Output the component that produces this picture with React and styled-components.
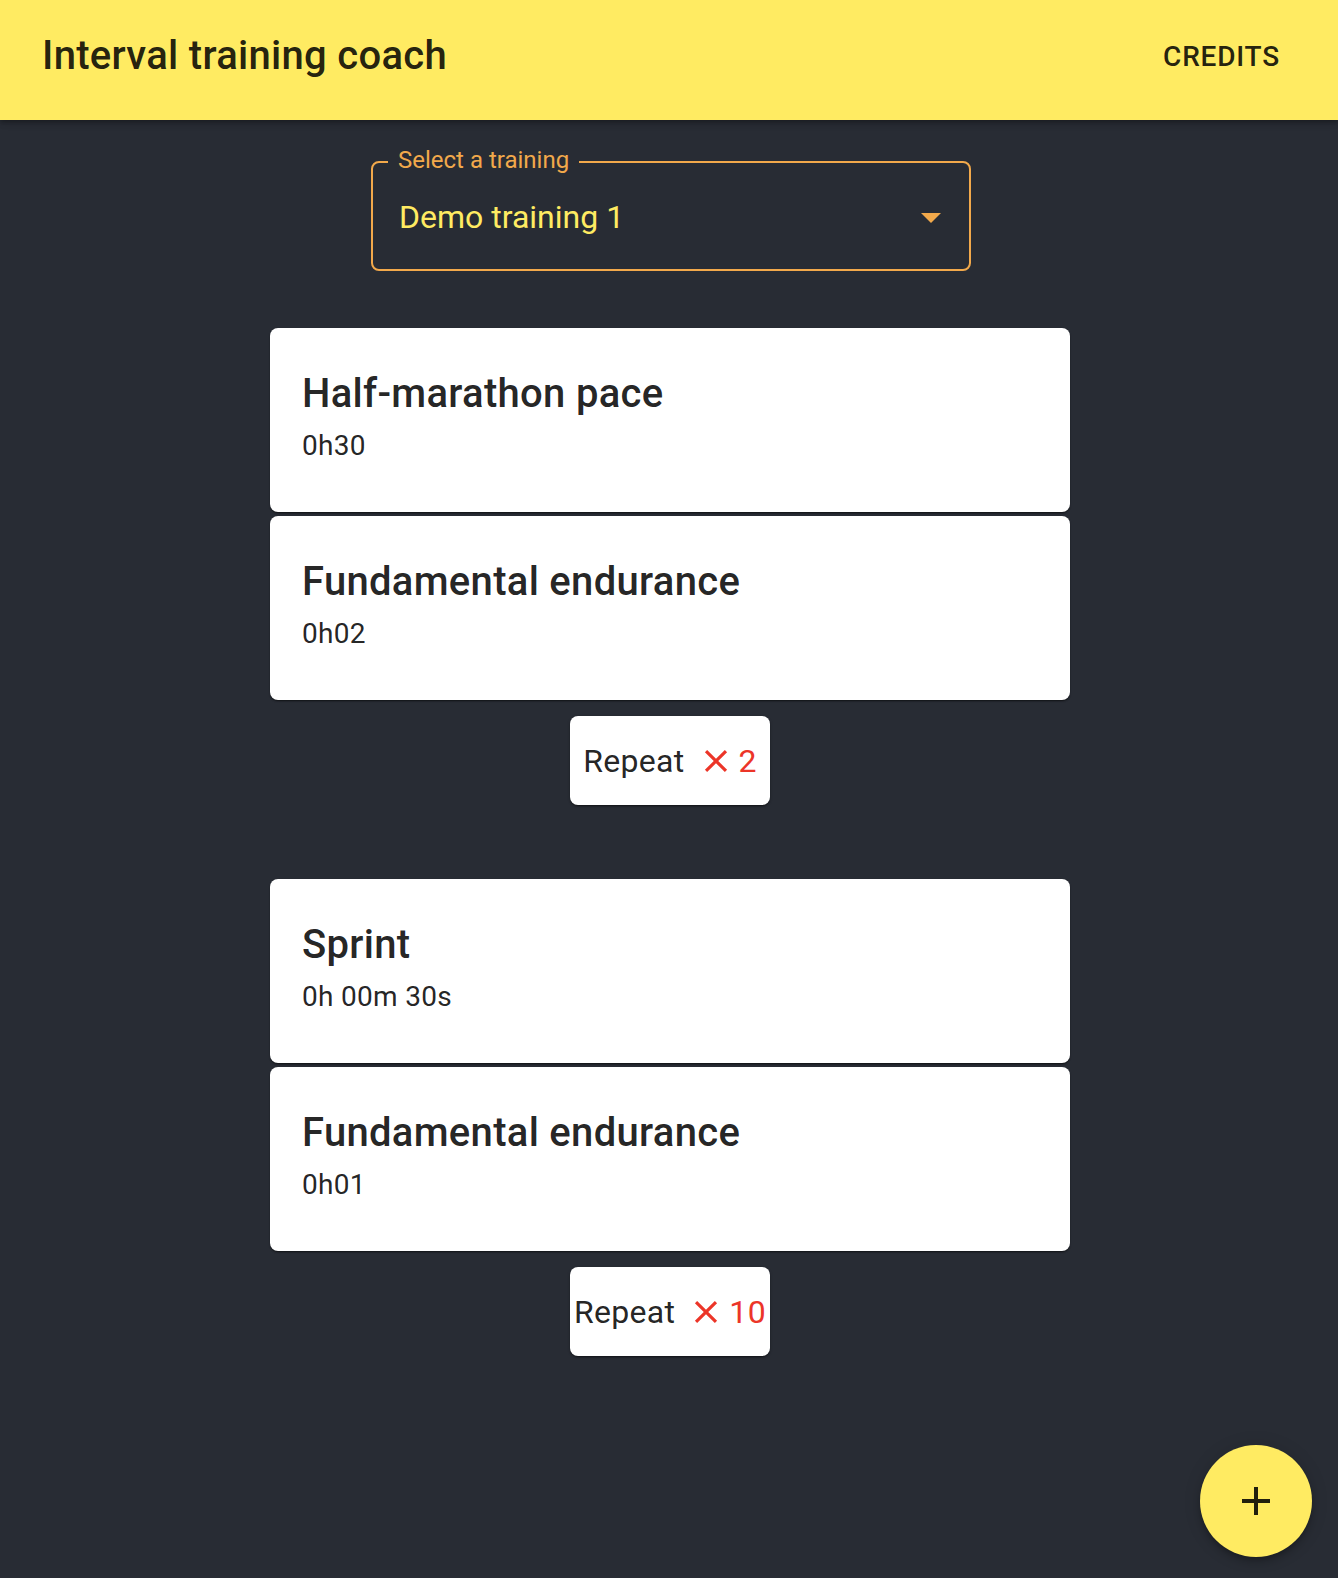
import React from "react";
import styled, { createGlobalStyle } from "styled-components";

const GlobalStyle = createGlobalStyle`
  body {
    margin: 0;
    background-color: #282c34;
    font-family: Roboto, "Liberation Sans", sans-serif;
  }
`;

const Page = styled.div`
  min-height: 100vh;
  background-color: #282c34;
`;

const Header = styled.header`
  display: flex;
  align-items: center;
  justify-content: space-between;
  box-sizing: border-box;
  height: 120px;
  padding: 0 42px 8px 42px;
  background-color: #ffeb62;
  color: rgba(0, 0, 0, 0.87);
  box-shadow: 0px 2px 4px -1px rgba(0, 0, 0, 0.2),
    0px 4px 5px 0px rgba(0, 0, 0, 0.14), 0px 1px 10px 0px rgba(0, 0, 0, 0.12);
`;

const Title = styled.h1`
  margin: 0;
  font-size: 40px;
  font-weight: 500;
  line-height: 1.6;
  letter-spacing: 0.3px;
`;

const CreditsButton = styled.button`
  border: none;
  background: transparent;
  padding: 12px 16px;
  font-family: inherit;
  font-size: 28px;
  font-weight: 500;
  letter-spacing: 0.8px;
  text-transform: uppercase;
  color: rgba(0, 0, 0, 0.87);
  cursor: pointer;
`;

const Main = styled.main`
  display: flex;
  flex-direction: column;
  align-items: center;
  padding: 41px 0 80px 2px;
`;

const SelectBox = styled.div`
  position: relative;
  display: flex;
  align-items: center;
  box-sizing: border-box;
  width: 600px;
  height: 110px;
  padding: 2px 14px 0 26px;
  border: 2px solid #f2a94b;
  border-radius: 8px;
  margin: 0 0 57px 2px;
  cursor: pointer;
`;

const SelectLabel = styled.span`
  position: absolute;
  top: -17px;
  left: 15px;
  padding: 0 10px;
  background-color: #282c34;
  color: #f2a94b;
  font-size: 24px;
  line-height: 28px;
`;

const SelectValue = styled.span`
  flex: 1;
  color: #ffeb62;
  font-size: 32px;
  line-height: 1.4375;
`;

const Group = styled.section`
  display: flex;
  flex-direction: column;
  align-items: center;
  gap: 4px;
  margin-bottom: 74px;
`;

const Card = styled.div`
  box-sizing: border-box;
  width: 800px;
  padding: 34px 32px 46px;
  background-color: #fff;
  border-radius: 8px;
  color: rgba(0, 0, 0, 0.87);
  box-shadow: 0px 2px 2px -1px rgba(0, 0, 0, 0.4),
    0px 1px 2px 0px rgba(0, 0, 0, 0.3);
`;

const CardTitle = styled.div`
  font-size: 40px;
  font-weight: 500;
  line-height: 64px;
  letter-spacing: 0.3px;
`;

const CardDuration = styled.div`
  font-size: 28px;
  line-height: 40px;
  letter-spacing: 0.3px;
`;

const RepeatBox = styled.div`
  display: flex;
  align-items: center;
  justify-content: center;
  box-sizing: border-box;
  width: 200px;
  height: 89px;
  margin-top: 12px;
  background-color: #fff;
  border-radius: 8px;
  color: rgba(0, 0, 0, 0.87);
  font-size: 32px;
  letter-spacing: 0.3px;
  white-space: nowrap;
  box-shadow: 0px 2px 2px -1px rgba(0, 0, 0, 0.4),
    0px 1px 3px 0px rgba(0, 0, 0, 0.3);
`;

const Times = styled.span`
  display: flex;
  align-items: center;
  gap: 4px;
  margin-left: 12px;
  color: #ec3528;
`;

const Fab = styled.button`
  position: fixed;
  right: 26px;
  bottom: 21px;
  display: flex;
  align-items: center;
  justify-content: center;
  width: 112px;
  height: 112px;
  padding: 0;
  border: none;
  border-radius: 50%;
  background-color: #ffeb62;
  color: rgba(0, 0, 0, 0.87);
  cursor: pointer;
  box-shadow: 0px 3px 5px -1px rgba(0, 0, 0, 0.2),
    0px 6px 10px 0px rgba(0, 0, 0, 0.14), 0px 1px 18px 0px rgba(0, 0, 0, 0.12);
`;

const ArrowDropDown = () => (
  <svg width="48" height="48" viewBox="0 0 24 24" fill="#f2a94b">
    <path d="M7 10l5 5 5-5z" />
  </svg>
);

const CloseIcon = () => (
  <svg width="38" height="38" viewBox="0 0 24 24" fill="currentColor">
    <path d="M19 6.41 17.59 5 12 10.59 6.41 5 5 6.41 10.59 12 5 17.59 6.41 19 12 13.41 17.59 19 19 17.59 13.41 12z" />
  </svg>
);

const AddIcon = () => (
  <svg width="48" height="48" viewBox="0 0 24 24" fill="currentColor">
    <path d="M19 13h-6v6h-2v-6H5v-2h6V5h2v6h6z" />
  </svg>
);

const groups = [
  {
    steps: [
      { name: "Half-marathon pace", duration: "0h30" },
      { name: "Fundamental endurance", duration: "0h02" },
    ],
    repeat: 2,
  },
  {
    steps: [
      { name: "Sprint", duration: "0h 00m 30s" },
      { name: "Fundamental endurance", duration: "0h01" },
    ],
    repeat: 10,
  },
];

const App = () => {
  return (
    <Page>
      <GlobalStyle />
      <Header>
        <Title>Interval training coach</Title>
        <CreditsButton>Credits</CreditsButton>
      </Header>
      <Main>
        <SelectBox>
          <SelectLabel>Select a training</SelectLabel>
          <SelectValue>Demo training 1</SelectValue>
          <ArrowDropDown />
        </SelectBox>
        {groups.map((group, i) => (
          <Group key={i}>
            {group.steps.map((step, j) => (
              <Card key={j}>
                <CardTitle>{step.name}</CardTitle>
                <CardDuration>{step.duration}</CardDuration>
              </Card>
            ))}
            <RepeatBox>
              Repeat
              <Times>
                <CloseIcon />
                {group.repeat}
              </Times>
            </RepeatBox>
          </Group>
        ))}
      </Main>
      <Fab aria-label="add">
        <AddIcon />
      </Fab>
    </Page>
  );
};

export default App;
